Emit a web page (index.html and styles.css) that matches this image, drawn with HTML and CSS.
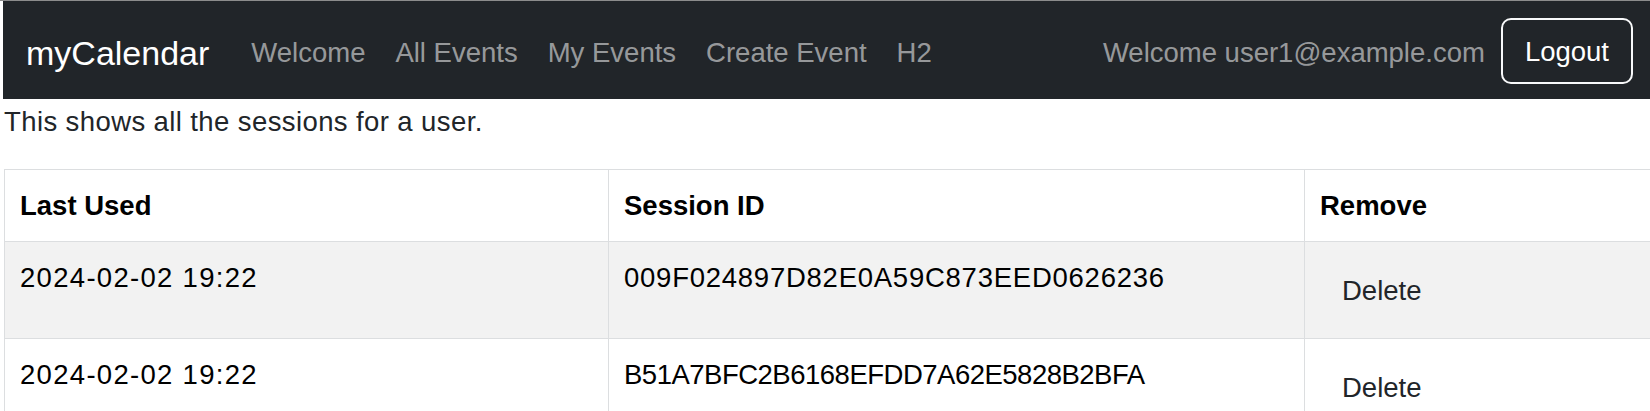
FILE: index.html
```html
<!DOCTYPE html>
<html lang="en">
<head>
<meta charset="utf-8">
<title>myCalendar - Sessions</title>
<link rel="stylesheet" href="styles.css">
</head>
<body>
<nav class="navbar">
  <a class="brand" href="#">myCalendar</a>
  <ul class="nav-links">
    <li><a href="#">Welcome</a></li>
    <li><a href="#">All Events</a></li>
    <li><a href="#">My Events</a></li>
    <li><a href="#">Create Event</a></li>
    <li><a href="#">H2</a></li>
  </ul>
  <div class="nav-user">
    <span class="user-text">Welcome user1@example.com</span>
    <button class="btn-logout" type="button">Logout</button>
  </div>
</nav>
<p class="intro">This shows all the sessions for a user.</p>
<table class="sessions">
  <colgroup>
    <col class="col-used">
    <col class="col-id">
    <col class="col-remove">
  </colgroup>
  <thead>
    <tr><th>Last Used</th><th>Session ID</th><th>Remove</th></tr>
  </thead>
  <tbody>
    <tr class="striped">
      <td class="cell-date">2024-02-02 19:22</td>
      <td class="cell-id cell-id-digits">009F024897D82E0A59C873EED0626236</td>
      <td><button class="btn-delete" type="button">Delete</button></td>
    </tr>
    <tr>
      <td class="cell-date">2024-02-02 19:22</td>
      <td class="cell-id cell-id-letters">B51A7BFC2B6168EFDD7A62E5828B2BFA</td>
      <td><button class="btn-delete" type="button">Delete</button></td>
    </tr>
  </tbody>
</table>
</body>
</html>
```
FILE: styles.css
```css
html, body {
  margin: 0;
  padding: 0;
  background: #ffffff;
}
body {
  padding-left: 3px;
  border-top: 1px solid #8c8c8c;
  font-family: "Liberation Sans", Arial, sans-serif;
  font-size: 27.5px;
  line-height: 41px;
  color: #212529;
  overflow: hidden;
}
.navbar {
  display: flex;
  align-items: center;
  background: #212529;
  padding: 16px 17px 14px 23px;
}
.brand {
  font-size: 34px;
  line-height: 50px;
  padding: 11px 0 7px;
  margin-right: 27px;
  color: #ffffff;
  text-decoration: none;
}
.nav-links {
  display: flex;
  list-style: none;
  margin: 0;
  padding: 0;
}
.nav-links a {
  display: block;
  padding: 3px 15px 0;
  color: rgba(255, 255, 255, 0.55);
  text-decoration: none;
}
.nav-user {
  margin-left: auto;
  display: flex;
  align-items: center;
}
.user-text {
  color: rgba(255, 255, 255, 0.55);
  padding-top: 3px;
  margin-right: 16px;
}
.btn-logout {
  font-family: inherit;
  font-size: 27.5px;
  line-height: 41px;
  color: #ffffff;
  background: transparent;
  border: 2px solid #f8f9fa;
  border-radius: 10px;
  padding: 10.5px 22px;
  cursor: pointer;
}
.intro {
  margin: 2px 0 27px 1px;
  letter-spacing: 0.4px;
}
.sessions {
  border-collapse: collapse;
  table-layout: fixed;
  width: calc(100% + 40px);
  margin-left: 1px;
}
.col-used { width: 604px; }
.col-id { width: 696px; }
.sessions th,
.sessions td {
  border: 1px solid #dcdee0;
  padding: 15px 15px;
  text-align: left;
  vertical-align: top;
  white-space: nowrap;
}
.sessions th {
  font-weight: bold;
  color: #000000;
}
.sessions .cell-date {
  letter-spacing: 1.3px;
  color: #000000;
}
.sessions .cell-id {
  color: #000000;
}
.sessions .cell-id-digits {
  letter-spacing: 0.75px;
}
.sessions .cell-id-letters {
  letter-spacing: -0.5px;
}
.sessions tr.striped td {
  background: #f2f2f2;
}
.btn-delete {
  font-family: inherit;
  font-size: 27.5px;
  line-height: 41px;
  color: #212529;
  background: transparent;
  border: 2px solid transparent;
  border-radius: 10px;
  padding: 10.5px 20px;
}
```
